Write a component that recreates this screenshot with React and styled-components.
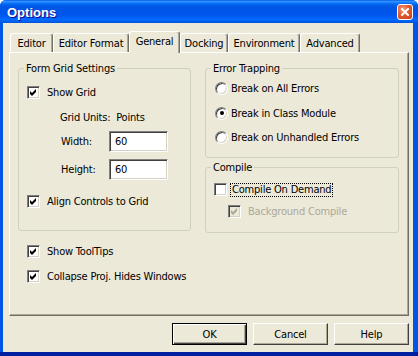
import styled, { createGlobalStyle } from "styled-components";

const GlobalStyle = createGlobalStyle`
  html, body {
    margin: 0;
    padding: 0;
    background: #ffffff;
  }
  body {
    font-family: "DejaVu Sans Condensed", "Liberation Sans", sans-serif;
    font-size: 11px;
    letter-spacing: -0.2px;
    color: #000;
  }
`;

const tabs = [
  { label: "Editor", width: 43 },
  { label: "Editor Format", width: 76 },
  { label: "General", width: 51, active: true },
  { label: "Docking", width: 48 },
  { label: "Environment", width: 72 },
  { label: "Advanced", width: 60 },
];

function CheckMark({ color = "#000" }) {
  return (
    <svg width="7" height="7" viewBox="0 0 7 7">
      <path d="M0 2 L2 4 L6 0 L6 3 L2 7 L0 5 Z" fill={color} />
    </svg>
  );
}

function CloseGlyph() {
  return (
    <svg width="8" height="8" viewBox="0 0 8 8">
      <path d="M1 1 L7 7 M7 1 L1 7" stroke="#fff" strokeWidth="2" strokeLinecap="square" />
    </svg>
  );
}

function Check({ checked, disabled, focused, children }) {
  return (
    <CheckRow>
      <Box $disabled={disabled}>
        {checked && <CheckMark color={disabled ? "#ACA899" : "#000"} />}
      </Box>
      <Label $disabled={disabled} $focused={focused}>{children}</Label>
    </CheckRow>
  );
}

function Radio({ selected, children, $top }) {
  return (
    <RadioRow $top={$top}>
      <Circle>{selected && <Dot />}</Circle>
      <span>{children}</span>
    </RadioRow>
  );
}

export default function App() {
  return (
    <>
      <GlobalStyle />
      <Window>
        <TitleBar>
          <Title>Options</Title>
          <CloseButton>
            <CloseGlyph />
          </CloseButton>
        </TitleBar>
        <Body>
          <TabStrip>
            {tabs.map((t) => (
              <Tab key={t.label} $width={t.width} $active={t.active}>
                {t.label}
              </Tab>
            ))}
          </TabStrip>
          <Panel>
            <Columns>
              <Group $pb={20}>
                <Legend>Form Grid Settings</Legend>
                <Row $top={9}>
                  <Check checked>Show Grid</Check>
                </Row>
                <Row $top={8} $h={16} $indent={33}>
                  Grid Units:&nbsp; Points
                </Row>
                <Row $top={6} $h={21} $indent={34}>
                  <FieldLabel>Width:</FieldLabel>
                  <TextBox>60</TextBox>
                </Row>
                <Row $top={7} $h={21} $indent={34}>
                  <FieldLabel>Height:</FieldLabel>
                  <TextBox>60</TextBox>
                </Row>
                <Row $top={13}>
                  <Check checked>Align Controls to Grid</Check>
                </Row>
              </Group>
              <RightColumn>
                <Group $pb={12}>
                  <Legend>Error Trapping</Legend>
                  <Radio $top={5}>Break on All Errors</Radio>
                  <Radio $top={9} selected>Break in Class Module</Radio>
                  <Radio $top={8}>Break on Unhandled Errors</Radio>
                </Group>
                <Group $pb={13}>
                  <Legend>Compile</Legend>
                  <Row $top={8} $h={15}>
                    <Check focused>Compile On Demand</Check>
                  </Row>
                  <Row $top={7} $h={15} $indent={14}>
                    <Check checked disabled>Background Compile</Check>
                  </Row>
                </Group>
              </RightColumn>
            </Columns>
            <Row $top={10} $indent={9}>
              <Check checked>Show ToolTips</Check>
            </Row>
            <Row $top={8} $indent={9}>
              <Check checked>Collapse Proj. Hides Windows</Check>
            </Row>
          </Panel>
          <ButtonRow>
            <Button $default>OK</Button>
            <Button>Cancel</Button>
            <Button>Help</Button>
          </ButtonRow>
        </Body>
      </Window>
    </>
  );
}

const Window = styled.div`
  width: 418px;
  height: 356px;
  display: flex;
  flex-direction: column;
  border-radius: 6px 6px 0 0;
  overflow: hidden;
  background: linear-gradient(
    to bottom,
    #0055e5 calc(100% - 4px),
    #001ea0 calc(100% - 4px)
  );
`;

const TitleBar = styled.div`
  height: 23px;
  flex: none;
  display: flex;
  align-items: center;
  justify-content: space-between;
  padding: 0 5px 0 7px;
  background: linear-gradient(
    to bottom,
    #0058ee 0%,
    #3593ff 6%,
    #127dff 12%,
    #0262ee 20%,
    #0057e5 30%,
    #0055eb 60%,
    #005bf5 72%,
    #026afe 84%,
    #0062ef 92%,
    #0052d6 100%
  );
`;

const Title = styled.div`
  font-family: "Liberation Sans", Arial, sans-serif;
  font-weight: bold;
  font-size: 13px;
  letter-spacing: 0;
  color: #fff;
  text-shadow: 1px 1px #0f1089;
  padding-top: 1px;
`;

const CloseButton = styled.div`
  width: 16px;
  height: 16px;
  box-sizing: border-box;
  border: 1px solid #fff;
  border-radius: 3px;
  display: flex;
  align-items: center;
  justify-content: center;
  background: radial-gradient(circle at 35% 30%, #f29b7c 0%, #e25a2f 45%, #c7401a 100%);
`;

const Body = styled.div`
  flex: 1;
  margin: 0 5px 4px 3px;
  background: #ece9d8;
  padding: 8px 4px 7px 6px;
  display: flex;
  flex-direction: column;
`;

const TabStrip = styled.div`
  display: flex;
  align-items: flex-end;
  height: 21px;
  padding-left: 1px;
`;

const Tab = styled.div`
  width: ${(p) => p.$width}px;
  height: ${(p) => (p.$active ? 22 : 19)}px;
  margin-bottom: ${(p) => (p.$active ? -1 : 0)}px;
  padding-bottom: ${(p) => (p.$active ? 3 : 0)}px;
  box-sizing: border-box;
  position: relative;
  z-index: ${(p) => (p.$active ? 1 : 0)};
  display: flex;
  align-items: center;
  justify-content: center;
  background: #ece9d8;
  border-top: 1px solid #fff;
  border-left: 1px solid #fff;
  border-right: 1px solid #716f64;
  box-shadow: inset -1px 0 #aca899;
  border-radius: 3px 3px 0 0;
  white-space: nowrap;
`;

const Panel = styled.div`
  height: 264px;
  box-sizing: border-box;
  border-top: 1px solid #fff;
  border-left: 1px solid #fff;
  border-right: 1px solid #716f64;
  border-bottom: 1px solid #716f64;
  box-shadow: inset -1px -1px #aca899;
  padding: 9px 9px 0 8px;
`;

const Columns = styled.div`
  display: grid;
  grid-template-columns: 173px 194px;
  column-gap: 14px;
  align-items: start;
`;

const RightColumn = styled.div`
  display: flex;
  flex-direction: column;
  gap: 3px;
`;

const Group = styled.fieldset`
  margin: 0;
  padding: 0 8px ${(p) => p.$pb}px 8px;
  border: 1px solid #d0d0bf;
  border-radius: 3px;
  min-width: 0;
`;

const Legend = styled.legend`
  padding: 0 2px;
  margin-left: -3px;
  line-height: 13px;
`;

const Row = styled.div`
  display: flex;
  align-items: center;
  height: ${(p) => p.$h || 17}px;
  margin-top: ${(p) => p.$top || 0}px;
  padding-left: ${(p) => p.$indent || 0}px;
  white-space: nowrap;
`;

const CheckRow = styled.div`
  display: flex;
  align-items: center;
  gap: 5px;
`;

const Box = styled.div`
  width: 13px;
  height: 13px;
  box-sizing: border-box;
  border: 1px solid;
  border-color: #808080 #fff #fff #808080;
  box-shadow: inset 1px 1px #404040, inset -1px -1px #d4d0c8;
  background: ${(p) => (p.$disabled ? "#ece9d8" : "#fff")};
  display: flex;
  align-items: center;
  justify-content: center;
`;

const Label = styled.span`
  color: ${(p) => (p.$disabled ? "#aca899" : "#000")};
  border: 1px dotted ${(p) => (p.$focused ? "#000" : "transparent")};
  padding: 0 1px;
  margin-left: ${(p) => (p.$focused ? -2 : 0)}px;
  line-height: 12px;
`;

const RadioRow = styled.div`
  display: flex;
  align-items: center;
  gap: 3px;
  height: 16px;
  margin-top: ${(p) => p.$top || 0}px;
  padding-left: 1px;
  white-space: nowrap;
`;

const Circle = styled.div`
  width: 13px;
  height: 13px;
  box-sizing: border-box;
  border-radius: 50%;
  border: 1px solid;
  border-color: #808080 #fff #fff #808080;
  box-shadow: inset 1px 1px #404040, inset -1px -1px #d4d0c8;
  background: #fff;
  display: flex;
  align-items: center;
  justify-content: center;
`;

const Dot = styled.div`
  width: 4px;
  height: 4px;
  border-radius: 50%;
  background: #000;
`;

const FieldLabel = styled.span`
  width: 48px;
`;

const TextBox = styled.div`
  width: 59px;
  height: 21px;
  box-sizing: border-box;
  border: 1px solid;
  border-color: #808080 #fff #fff #808080;
  box-shadow: inset 1px 1px #404040, inset -1px -1px #d4d0c8;
  background: #fff;
  padding-left: 5px;
  display: flex;
  align-items: center;
`;

const ButtonRow = styled.div`
  display: flex;
  justify-content: flex-end;
  gap: 6px;
  margin-top: 7px;
`;

const Button = styled.div`
  width: 75px;
  height: 22px;
  box-sizing: border-box;
  display: flex;
  align-items: center;
  justify-content: center;
  background: #ece9d8;
  border: 1px solid ${(p) => (p.$default ? "#000" : "transparent")};
  box-shadow: ${(p) =>
    p.$default
      ? "inset 1px 1px #fff, inset -1px -1px #404040, inset -2px -2px #aca899"
      : "inset 1px 1px #fff, inset -1px -1px #716f64, inset -2px -2px #aca899"};
  ${(p) =>
    !p.$default &&
    `border-color: #fff #404040 #404040 #fff; box-shadow: inset -1px -1px #aca899;`}
`;
